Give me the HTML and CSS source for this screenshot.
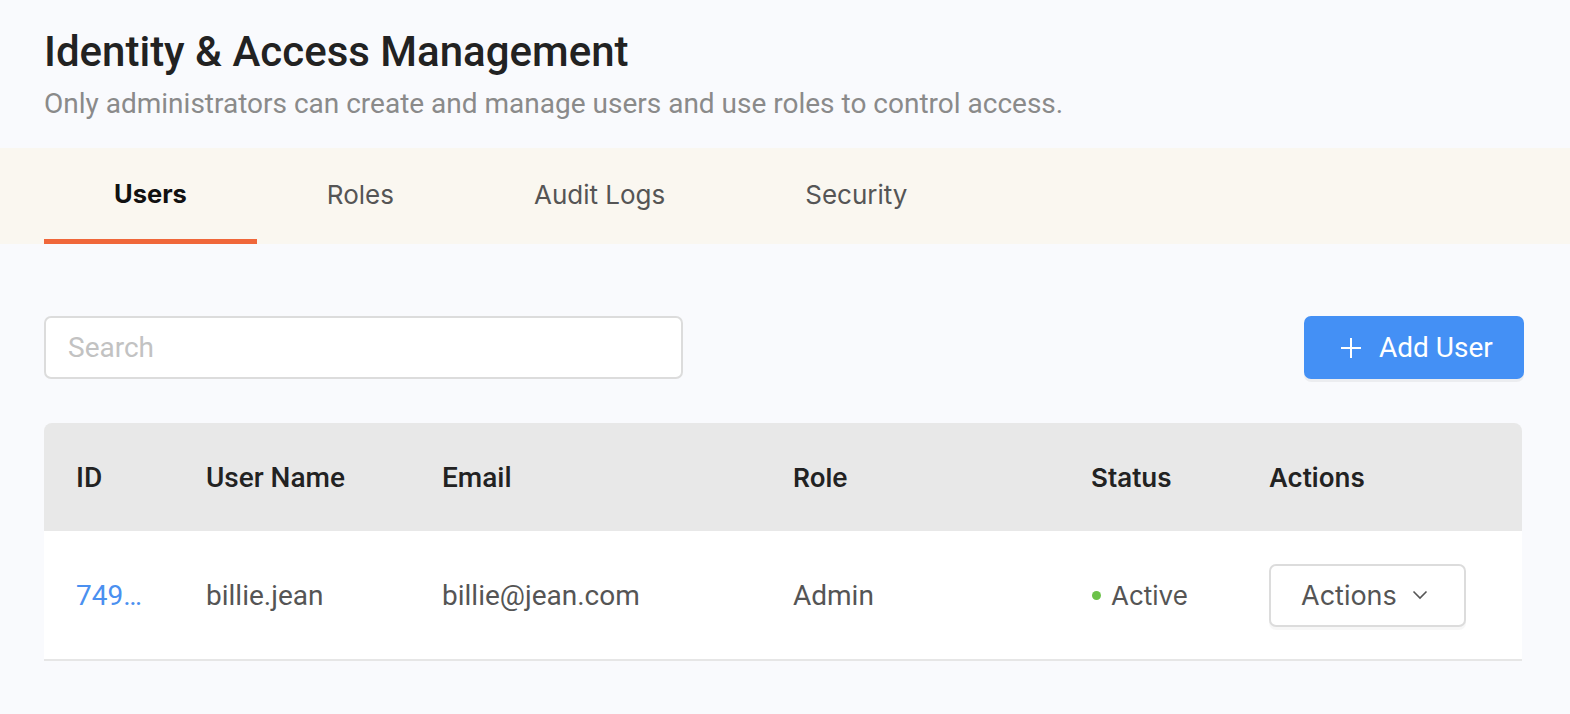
FILE: index.html
```html
<!DOCTYPE html>
<html lang="en">
<head>
<meta charset="utf-8">
<title>Identity &amp; Access Management</title>
<link rel="stylesheet" href="styles.css">
</head>
<body>
<div class="page">
  <header class="page-head">
    <h1 class="title">Identity &amp; Access Management</h1>
    <p class="subtitle">Only administrators can create and manage users and use roles to control access.</p>
  </header>

  <nav class="tabs">
    <a class="tab active">Users</a>
    <a class="tab">Roles</a>
    <a class="tab">Audit Logs</a>
    <a class="tab">Security</a>
  </nav>

  <main class="content">
    <div class="toolbar">
      <input class="search" type="text" placeholder="Search">
      <button class="btn-primary">
        <svg class="plus" width="22" height="22" viewBox="0 0 22 22"><path d="M11 1v20M1 11h20" stroke="#fff" stroke-width="2" fill="none"/></svg>
        <span>Add User</span>
      </button>
    </div>

    <div class="table">
      <div class="row head">
        <div class="cell r">ID</div>
        <div class="cell r">User Name</div>
        <div class="cell r">Email</div>
        <div class="cell i">Role</div>
        <div class="cell i">Status</div>
        <div class="cell i">Actions</div>
      </div>
      <div class="row body">
        <div class="cell r id">749…</div>
        <div class="cell r">billie.jean</div>
        <div class="cell r">billie@jean.com</div>
        <div class="cell r">Admin</div>
        <div class="cell i status"><span class="dot"></span>Active</div>
        <div class="cell i">
          <button class="btn-actions">
            <span>Actions</span>
            <svg width="16" height="10" viewBox="0 0 16 10"><path d="M1.5 1.5l6.5 6.5 6.5-6.5" stroke="#555" stroke-width="1.6" fill="none"/></svg>
          </button>
        </div>
      </div>
    </div>
  </main>
</div>
</body>
</html>
```

FILE: styles.css
```css
* { box-sizing: border-box; }
html, body { margin: 0; padding: 0; }
body {
  background: #f9fafd;
  font-family: Roboto, "Liberation Sans", sans-serif;
  color: #222;
}
.page { width: 1570px; }

.page-head { padding: 28px 44px 0 44px; height: 148px; }
.title {
  margin: 0;
  font-size: 42px;
  font-weight: 500;
  line-height: 48px;
  color: #222;
}
.subtitle {
  margin: 10px 0 0 0;
  font-size: 28px;
  line-height: 36px;
  color: #8a8a8a;
}

.tabs {
  display: flex;
  background: #faf7f0;
  height: 96px;
  padding-left: 44px;
}
.tab {
  display: flex;
  align-items: center;
  padding: 2px 70px 0 70px;
  height: 96px;
  font-family: Inter, Roboto, sans-serif;
  font-size: 26px;
  color: #555;
  border-bottom: 5px solid transparent;
}
.tab.active {
  color: #111;
  font-size: 25.5px;
  font-weight: 700;
  border-bottom-color: #f0673a;
  padding-top: 0;
}

.content { padding: 72px 46px 0 44px; }
.toolbar {
  display: flex;
  justify-content: space-between;
  align-items: center;
}
.search {
  width: 639px;
  height: 63px;
  border: 2px solid #dcdcdc;
  border-radius: 7px;
  background: #fff;
  padding: 0 22px;
  font-family: Roboto, sans-serif;
  font-size: 28px;
  color: #333;
  outline: none;
}
.search::placeholder { color: #c2c2c2; }
.btn-primary {
  display: flex;
  align-items: center;
  gap: 17px;
  width: 220px;
  height: 63px;
  padding: 0 0 0 36px;
  border: none;
  border-radius: 7px;
  background: #4490f5;
  color: #fff;
  font-family: Roboto, sans-serif;
  font-size: 28px;
  box-shadow: 0 3px 0 rgba(0,0,0,0.05);
}

.table {
  margin-top: 44px;
  margin-right: 2px;
}
.row {
  display: grid;
  grid-template-columns: 130px 236px 351px 298px 178px 1fr;
  align-items: center;
}
.row.head {
  height: 108px;
  background: #e8e8e8;
  border-radius: 8px 8px 0 0;
  font-weight: 500;
  color: #222;
}
.row.body {
  height: 130px;
  background: #fff;
  border-bottom: 2px solid #e6e6e6;
  color: #555;
}
.cell {
  padding-left: 32px;
  font-size: 28px;
  white-space: nowrap;
}
.cell.r { font-family: Roboto, sans-serif; }
.cell.i { font-family: Inter, Roboto, sans-serif; font-size: 26px; }
.row.head .cell.i { font-weight: 600; }
.cell.id { color: #4a90f0; }
.status { display: flex; align-items: center; gap: 10px; }
.dot {
  width: 9px;
  height: 9px;
  border-radius: 50%;
  background: #6cc24a;
  margin-left: 1px;
}
.btn-actions {
  display: flex;
  align-items: center;
  justify-content: space-between;
  width: 197px;
  height: 63px;
  padding: 0 36px 0 30px;
  background: #fff;
  border: 2px solid #dcdcdc;
  border-radius: 7px;
  font-family: Inter, Roboto, sans-serif;
  font-size: 27px;
  color: #555;
  box-shadow: 0 3px 0 rgba(0,0,0,0.03);
}
```
